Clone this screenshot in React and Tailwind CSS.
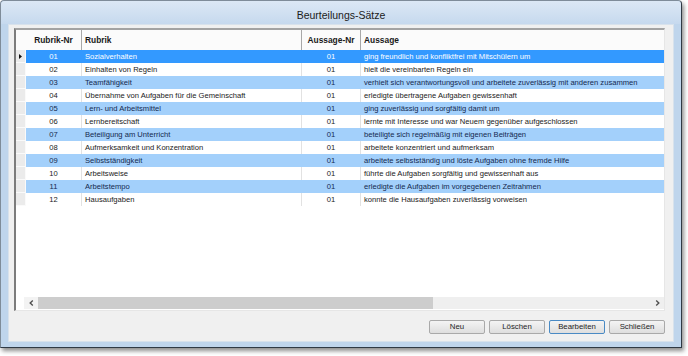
import React from 'react'

const rows = [
    ['01', 'Sozialverhalten', '01', 'ging freundlich und konfliktfrei mit Mitschülern um'],
    ['02', 'Einhalten von Regeln', '01', 'hielt die vereinbarten Regeln ein'],
    ['03', 'Teamfähigkeit', '01', 'verhielt sich verantwortungsvoll und arbeitete zuverlässig mit anderen zusammen'],
    ['04', 'Übernahme von Aufgaben für die Gemeinschaft', '01', 'erledigte übertragene Aufgaben gewissenhaft'],
    ['05', 'Lern- und Arbeitsmittel', '01', 'ging zuverlässig und sorgfältig damit um'],
    ['06', 'Lernbereitschaft', '01', 'lernte mit Interesse und war Neuem gegenüber aufgeschlossen'],
    ['07', 'Beteiligung am Unterricht', '01', 'beteiligte sich regelmäßig mit eigenen Beiträgen'],
    ['08', 'Aufmerksamkeit und Konzentration', '01', 'arbeitete konzentriert und aufmerksam'],
    ['09', 'Selbstständigkeit', '01', 'arbeitete selbstständig und löste Aufgaben ohne fremde Hilfe'],
    ['10', 'Arbeitsweise', '01', 'führte die Aufgaben sorgfältig und gewissenhaft aus'],
    ['11', 'Arbeitstempo', '01', 'erledigte die Aufgaben im vorgegebenen Zeitrahmen'],
    ['12', 'Hausaufgaben', '01', 'konnte die Hausaufgaben zuverlässig vorweisen'],
]

const GridRow = ({ row, index }) => {
    const selected = index === 0
    const striped = index % 2 === 0
    const rowClass = selected
        ? 'bg-[#3399ff] text-white'
        : striped
            ? 'bg-[#a3d0fb] text-[#13294f]'
            : 'bg-white text-[#222]'
    const line = selected || striped ? 'border-transparent' : 'border-[#e2e2e2]'

    return (
        <div className="flex h-[13px]">
            <div className="w-[10px] h-full bg-[#ebebeb] border-r border-b border-[#fafafa] flex items-center justify-center">
                {selected && (
                    <svg width="3" height="5" viewBox="0 0 3 5"><path d="M0 0 L3 2.5 L0 5 Z" fill="#111" /></svg>
                )}
            </div>
            <div className={`flex flex-1 h-full items-center ${rowClass}`}>
                <div className={`w-[56px] h-full flex items-center justify-center border-r ${line}`}>{row[0]}</div>
                <div className={`w-[220px] h-full flex items-center pl-[3px] border-r ${line} whitespace-nowrap`}>{row[1]}</div>
                <div className={`w-[59px] h-full flex items-center justify-center border-r ${line}`}>{row[2]}</div>
                <div className="flex-1 h-full flex items-center pl-[3px] whitespace-nowrap overflow-hidden">{row[3]}</div>
            </div>
        </div>
    )
}

const Chevron = ({ left }) => (
    <svg width="5" height="6" viewBox="0 0 5 6">
        <path d={left ? 'M3.8 0.6 L1.2 3 L3.8 5.4' : 'M1.2 0.6 L3.8 3 L1.2 5.4'} fill="none" stroke="#505050" strokeWidth="1.4" />
    </svg>
)

const Button = ({ label, focused }) => (
    <button
        className={`w-[56px] h-[14px] rounded-[2px] border text-[7.8px] leading-none text-[#1e1e1e] bg-gradient-to-b from-[#f4f4f4] to-[#dedede] ${focused ? 'border-[#4a8ac4]' : 'border-[#a9a9a9]'}`}
    >
        {label}
    </button>
)

export default function App() {
    return (
        <div className="w-[688px] h-[356px] bg-white" style={{ fontFamily: '"Liberation Sans", Arial, sans-serif' }}>
            <div className="w-[682px] h-[348px] flex flex-col border border-t-[#7f8c99] border-l-[#7f8c99] border-r-[#2f3944] border-b-[#2f3944] rounded-t-[4px] bg-[#bfd5ec] shadow-[2px_3px_4px_rgba(0,0,0,0.45)]">
                <div className="h-[23px] flex items-center justify-center pt-[6px] bg-gradient-to-b from-[#dce8f5] to-[#c6d9ee] rounded-t-[4px] text-[10.5px] text-[#1b1b1b]">
                    Beurteilungs-Sätze
                </div>
                <div className="mx-[7px] h-[318px] flex flex-col bg-[#f0f0f0] border border-[#d8e2ec] pl-[5px] pr-[8px] pt-[3px]">
                    <div className="h-[283px] flex flex-col bg-white border-t-2 border-l-2 border-t-[#a3a3a3] border-l-[#7c7c7c] border-r border-b border-r-[#e6e6e6] border-b-[#e6e6e6] text-[7.6px]">
                        <div className="flex h-[20px] bg-[#fbfbfb] font-bold text-[8.4px] text-[#1a1a1a]">
                            <div className="w-[10px]" />
                            <div className="w-[56px] flex items-center justify-center border-r border-[#a8a8a8]">Rubrik-Nr</div>
                            <div className="w-[220px] flex items-center pl-[3px] border-r border-[#a8a8a8]">Rubrik</div>
                            <div className="w-[59px] flex items-center justify-center border-r border-[#a8a8a8]">Aussage-Nr</div>
                            <div className="flex-1 flex items-center pl-[3px]">Aussage</div>
                        </div>
                        {rows.map((row, i) => (
                            <GridRow key={row[0]} row={row} index={i} />
                        ))}
                        <div className="flex-1" />
                        <div className="flex h-[12px] mb-[1px]">
                            <div className="w-[8px] bg-white" />
                            <div className="w-[14px] bg-[#f3f3f3] flex items-center justify-center"><Chevron left /></div>
                            <div className="w-[395px] bg-[#cdcdcd]" />
                            <div className="flex-1 bg-[#efefef]" />
                            <div className="w-[14px] bg-[#efefef] flex items-center justify-center"><Chevron /></div>
                        </div>
                    </div>
                    <div className="flex justify-end gap-[4px] mt-[9px]">
                        <Button label="Neu" />
                        <Button label="Löschen" />
                        <Button label="Bearbeiten" focused />
                        <Button label="Schließen" />
                    </div>
                </div>
            </div>
        </div>
    )
}
